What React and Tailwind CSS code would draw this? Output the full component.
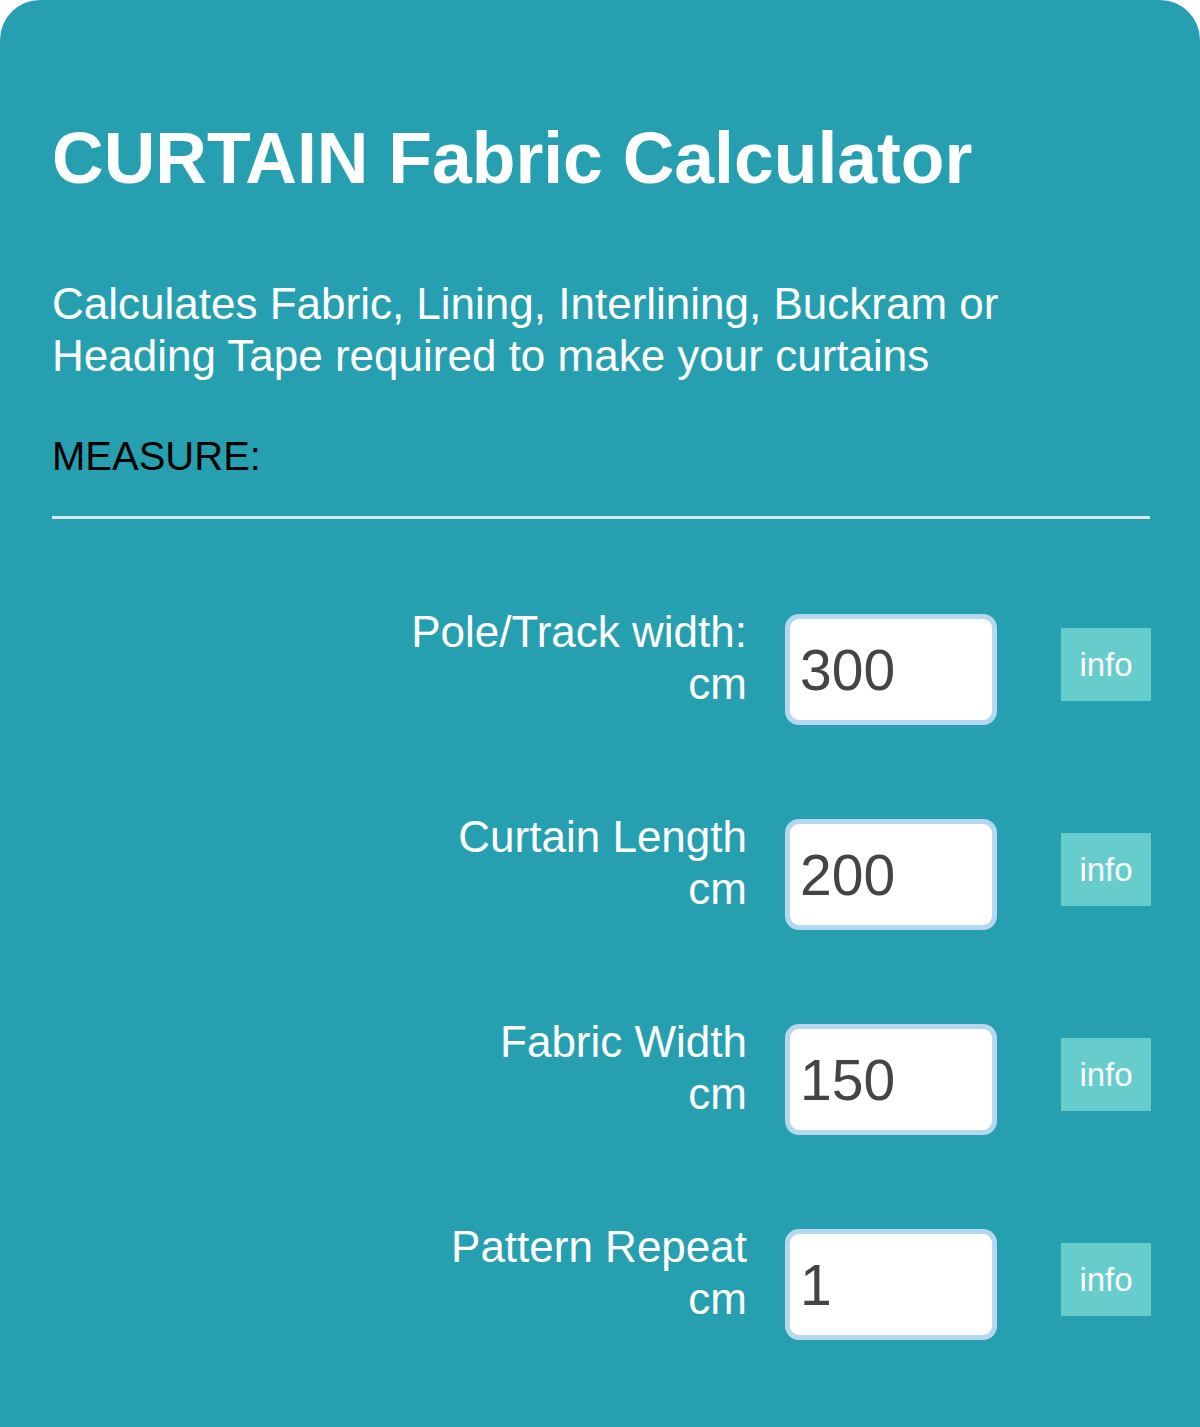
import React from 'react';

const rows = [
  { label: 'Pole/Track width:', value: '300' },
  { label: 'Curtain Length', value: '200' },
  { label: 'Fabric Width', value: '150' },
  { label: 'Pattern Repeat', value: '1' },
];

function Row({ label, value }) {
  return (
    <div className="flex items-start justify-end">
      <div className="text-right text-white text-[44px] leading-[52px]">
        <div>{label}</div>
        <div>cm</div>
      </div>
      <input
        type="text"
        defaultValue={value}
        className="ml-[38px] mt-[8px] w-[212px] h-[111px] rounded-[14px] border-[5px] border-[#b4d8ef] bg-white pl-[10px] text-[57px] text-[#444] outline-none"
      />
      <button className="ml-[64px] mt-[22px] w-[90px] h-[73px] bg-[#66cccc] text-white text-[33px]">
        info
      </button>
    </div>
  );
}

export default function App() {
  return (
    <div className="min-h-screen bg-white font-['Liberation_Sans',Arial,sans-serif]">
      <div className="min-h-[1427px] rounded-t-[40px] bg-[#26a0b0] pl-[52px] pr-[49px] pt-[118px] pb-[60px]">
        <h1 className="text-white font-bold text-[71.5px] leading-[80px]">CURTAIN Fabric Calculator</h1>
        <p className="mt-[80px] text-white text-[44px] leading-[52px]">
          Calculates Fabric, Lining, Interlining, Buckram or
          <br />
          Heading Tape required to make your curtains
        </p>
        <div className="mt-[51px] text-black text-[40px] leading-[46px]">MEASURE:</div>
        <div className="mt-[37px] mr-[1px] h-[3px] bg-[#d2eaf5]" />
        <div className="mt-[87px] flex flex-col gap-[86px]">
          {rows.map((r) => (
            <Row key={r.label} {...r} />
          ))}
        </div>
      </div>
    </div>
  );
}
